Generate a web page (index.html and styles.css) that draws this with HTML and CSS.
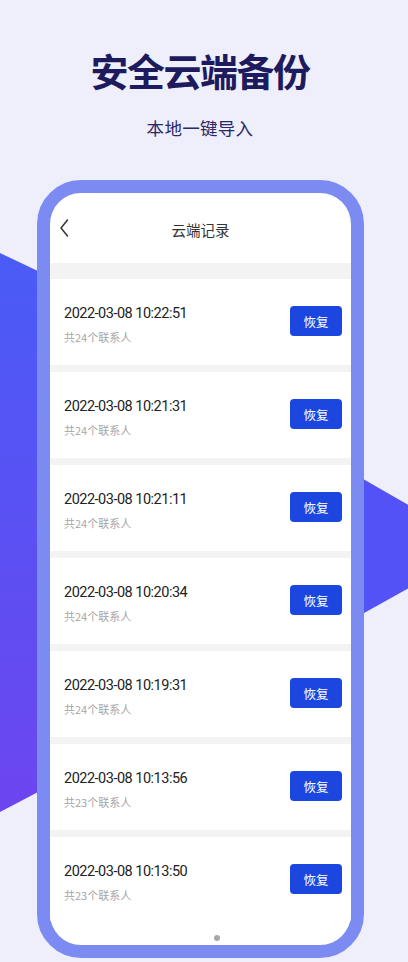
FILE: index.html
```html
<!DOCTYPE html>
<html lang="zh-CN">
<head>
    <meta charset="UTF-8">
    <meta name="viewport" content="width=device-width, initial-scale=1.0">
    <title>安全云端备份</title>
    <link rel="stylesheet" href="styles.css">
</head>
<body>
    <!-- background shapes behind the phone -->
    <svg class="bg-shapes" width="408" height="962" viewBox="0 0 408 962">
        <defs>
            <linearGradient id="leftFill" x1="0" y1="0" x2="0" y2="1">
                <stop offset="0" stop-color="#4a5cf6"/>
                <stop offset="1" stop-color="#6c45f0"/>
            </linearGradient>
        </defs>
        <polygon points="0,253 80,291 80,770 0,812" fill="url(#leftFill)"/>
        <polygon points="330,460 482,547 330,632" fill="#5252f6"/>
    </svg>

    <div class="hero">
        <h1>安全云端备份</h1>
        <p class="sub">本地一键导入</p>
    </div>

    <div class="phone">
        <div class="screen">
            <div class="topbar">
                <svg class="back" width="10" height="18" viewBox="0 0 10 18">
                    <path d="M8.5 1 L2 9 L8.5 17" fill="none" stroke="#333" stroke-width="1.5" stroke-linecap="round" stroke-linejoin="round"/>
                </svg>
                <span class="title">云端记录</span>
            </div>

            <div class="list">
                <div class="record">
                    <div class="info">
                        <div class="time">2022-03-08 10:22:51</div>
                        <div class="count">共24个联系人</div>
                    </div>
                    <button class="restore">恢复</button>
                </div>
                <div class="record">
                    <div class="info">
                        <div class="time">2022-03-08 10:21:31</div>
                        <div class="count">共24个联系人</div>
                    </div>
                    <button class="restore">恢复</button>
                </div>
                <div class="record">
                    <div class="info">
                        <div class="time">2022-03-08 10:21:11</div>
                        <div class="count">共24个联系人</div>
                    </div>
                    <button class="restore">恢复</button>
                </div>
                <div class="record">
                    <div class="info">
                        <div class="time">2022-03-08 10:20:34</div>
                        <div class="count">共24个联系人</div>
                    </div>
                    <button class="restore">恢复</button>
                </div>
                <div class="record">
                    <div class="info">
                        <div class="time">2022-03-08 10:19:31</div>
                        <div class="count">共24个联系人</div>
                    </div>
                    <button class="restore">恢复</button>
                </div>
                <div class="record">
                    <div class="info">
                        <div class="time">2022-03-08 10:13:56</div>
                        <div class="count">共23个联系人</div>
                    </div>
                    <button class="restore">恢复</button>
                </div>
                <div class="record">
                    <div class="info">
                        <div class="time">2022-03-08 10:13:50</div>
                        <div class="count">共23个联系人</div>
                    </div>
                    <button class="restore">恢复</button>
                </div>
            </div>

            <span class="scroll-dot"></span>
        </div>
    </div>
</body>
</html>
```

FILE: styles.css
```css
/* General Styling */
body {
    margin: 0;
    padding: 0;
    width: 408px;
    height: 962px;
    overflow: hidden;
    position: relative;
    background: #efeffb; /* light lavender */
    font-family: 'Noto Sans CJK SC', 'Noto Sans', sans-serif;
}

.bg-shapes {
    position: absolute;
    left: 0;
    top: 0;
    z-index: 0;
}

/* Heading */
.hero {
    position: relative;
    z-index: 1;
    text-align: center;
    padding-top: 42px;
    margin-left: -8px;
}

.hero h1 {
    margin: 0;
    font-size: 38px;
    line-height: 56px;
    font-weight: 700;
    color: #1d1b5e; /* dark navy */
    letter-spacing: -1.5px;
}

.hero .sub {
    margin: 18px 0 0;
    font-size: 17.5px;
    line-height: 24px;
    color: #29286a;
    letter-spacing: 0.3px;
}

/* Phone frame */
.phone {
    position: relative;
    z-index: 1;
    box-sizing: border-box;
    width: 327px;
    height: 778px;
    margin: 40px 0 0 37px;
    border: 13px solid #7b8bf2;
    border-radius: 44px;
    background: #7b8bf2;
}

.screen {
    position: relative;
    height: 100%;
    background: #fff;
    border-radius: 31px;
    overflow: hidden;
}

.topbar {
    position: relative;
    height: 70px;
    display: flex;
    align-items: center;
    justify-content: center;
}

.topbar .back {
    position: absolute;
    left: 9px;
    top: 26px;
}

.topbar .title {
    font-size: 14.5px;
    color: #333;
    margin-top: 2px;
}

.list {
    background: #f3f3f3;
    padding-top: 16px;
    display: flex;
    flex-direction: column;
    gap: 7px;
}

.record {
    height: 86px;
    background: #fff;
    display: flex;
    align-items: center;
    justify-content: space-between;
    padding: 0 9px 0 14px;
}

.info {
    margin-top: 4px;
}

.time {
    font-family: 'Roboto', sans-serif;
    font-size: 14.5px;
    line-height: 20px;
    letter-spacing: -0.5px;
    color: #222;
}

.count {
    margin-top: 5px;
    font-size: 11px;
    line-height: 16px;
    color: #a6a6a6;
}

.restore {
    width: 52px;
    height: 30px;
    border: none;
    border-radius: 4px;
    background: #1b47e0; /* blue */
    color: #fff;
    font-family: 'Noto Sans CJK SC', sans-serif;
    font-size: 12.5px;
    padding: 0;
    margin-top: -2px;
}

.scroll-dot {
    position: absolute;
    left: 164px;
    bottom: 4px;
    width: 6px;
    height: 6px;
    border-radius: 50%;
    background: #a8a8a8;
}
```
